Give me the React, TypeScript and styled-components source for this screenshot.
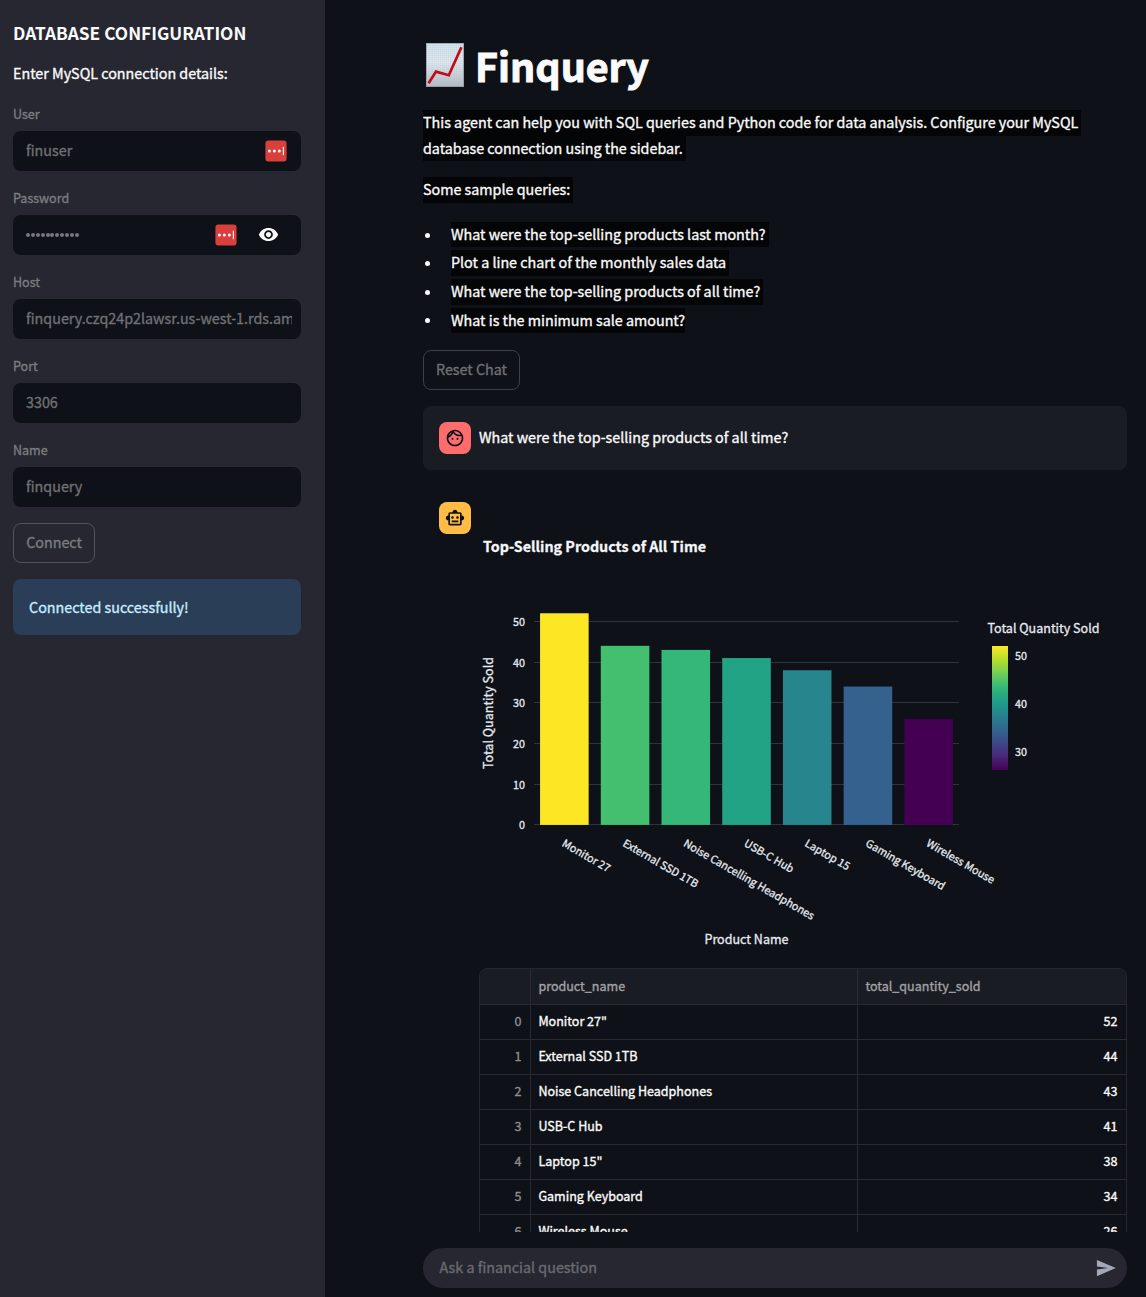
import React from "react";
import styled, { createGlobalStyle } from "styled-components";
import { MdOutlineFace, MdOutlineSmartToy, MdVisibility } from "react-icons/md";

const GlobalStyle = createGlobalStyle`
  * { box-sizing: border-box; }
  body {
    margin: 0;
    background: #0e1117;
    color: #fafafa;
    font-family: "Noto Sans CJK SC", "Noto Sans", sans-serif;
    font-size: 14.32px;
    line-height: 25.6px;
    -webkit-text-stroke: 0.35px currentColor;
  }
`;

const Page = styled.div`
  display: grid;
  grid-template-columns: 325px 1fr;
  height: 1297px;
  overflow: hidden;
`;

const Sidebar = styled.aside`
  background: #262730;
  padding: 21px 24px 0 13px;
`;

const SidebarTitle = styled.h2`
  margin: 0;
  font-size: 17.3px;
  line-height: 24px;
  font-weight: 600;
  white-space: nowrap;
  -webkit-text-stroke: 0;
`;

const SidebarText = styled.p`
  margin: 15px 0 17px;
`;

const Field = styled.div`
  margin-bottom: 16px;
`;

const Label = styled.label`
  display: block;
  height: 28px;
  line-height: 21px;
  font-size: 12.54px;
  color: #7b7c81;
`;

const InputBox = styled.div`
  display: flex;
  align-items: center;
  height: 40px;
  padding: 0 9px 0 13px;
  border-radius: 8px;
  background: #0e1117;
  color: #6f7074;
`;

const Value = styled.span`
  flex: 1;
  padding-bottom: 2px;
  overflow: hidden;
  white-space: nowrap;
`;

const Dots = styled.span`
  flex: 1;
  display: flex;
  gap: 0.9px;
  i {
    width: 4px;
    height: 4px;
    border-radius: 50%;
    background: #77787b;
  }
`;

const Manager = styled.svg<{ $gap: number }>`
  width: 22px;
  height: 22px;
  margin-right: ${(p) => p.$gap}px;
`;

const EyeIcon = styled(MdVisibility)`
  width: 21px;
  height: 21px;
  margin-right: 13.5px;
  color: #fafafa;
`;

const Button = styled.button<{ $width: number; $edge: string; $ink: string }>`
  display: block;
  width: ${(p) => p.$width}px;
  height: 40px;
  padding: 0 0 2px;
  border: 1px solid ${(p) => p.$edge};
  border-radius: 8px;
  background: transparent;
  color: ${(p) => p.$ink};
  font: inherit;
  -webkit-text-stroke: inherit;
`;

const Alert = styled.div`
  height: 56px;
  margin-top: 16px;
  padding: 16px;
  border-radius: 8px;
  background: #2a3e57;
  color: #c7ebff;
  line-height: 24px;
`;

const Main = styled.main`
  display: flex;
  flex-direction: column;
  height: 1297px;
  padding: 0 19px 0 98px;
`;

const Scroll = styled.div`
  height: 1232px;
  overflow: hidden;
  padding-top: 38px;
`;

const Title = styled.h1`
  display: flex;
  align-items: center;
  gap: 11px;
  margin: 0 0 19px;
  padding-left: 3px;
  height: 53px;
  font-size: 39.4px;
  line-height: 53px;
  font-weight: 700;
  -webkit-text-stroke: 1px currentColor;
`;

const ChartEmoji = styled.svg`
  width: 38px;
  height: 44px;
`;

const Marked = styled.span<{ $tail?: number }>`
  display: block;
  width: fit-content;
  padding: 0 ${(p) => p.$tail ?? 3}px 1.6px 0;
  background: #040507;
  line-height: 24px;
  white-space: nowrap;
`;

const Paragraph = styled.p`
  margin: 0 0 16px;
`;

const List = styled.ul`
  margin: 19px 0 17px;
  padding: 0;
  list-style: none;
`;

const Item = styled.li`
  display: flex;
  align-items: center;
  gap: 21px;
  padding-left: 2px;
  margin-bottom: 3px;
  &::before {
    content: "";
    width: 5px;
    height: 5px;
    margin-top: 1px;
    border-radius: 50%;
    background: #fafafa;
  }
`;

const Message = styled.section<{ $user?: boolean }>`
  display: flex;
  gap: 8px;
  margin-top: 16px;
  padding: ${(p) => (p.$user ? "16px" : "16px 0 16px 16px")};
  margin-bottom: ${(p) => (p.$user ? "0" : "16px")};
  border-radius: 8px;
  background: ${(p) => (p.$user ? "#1a1c24" : "transparent")};
`;

const Avatar = styled.div<{ $fill: string }>`
  display: flex;
  flex: none;
  align-items: center;
  justify-content: center;
  width: 32px;
  height: 32px;
  border-radius: 8px;
  background: ${(p) => p.$fill};
  color: #0e1117;
  font-size: 20px;
`;

const MessageText = styled.p`
  margin: 2px 0 4px;
`;

const Answer = styled.div`
  width: 648px;
`;

const ChartSvg = styled.svg`
  display: block;
  width: 648px;
  height: 450px;
  margin-bottom: 16px;
  fill: #e6eaf1;
  font-size: 10.75px;
  text {
    stroke: #e6eaf1;
    stroke-width: 0.3px;
  }
`;

const Table = styled.div`
  border: 1px solid #25272c;
  border-radius: 8px;
  overflow: hidden;
`;

const Row = styled.div<{ $head?: boolean }>`
  display: grid;
  grid-template-columns: 51px 327px 1fr;
  height: ${(p) => (p.$head ? 36 : 35)}px;
  border-bottom: 1px solid #292b30;
  background: ${(p) => (p.$head ? "#1a1c24" : "transparent")};
  color: ${(p) => (p.$head ? "#a0a1a5" : "#fafafa")};
  font-size: 12.54px;
  line-height: ${(p) => (p.$head ? 34 : 32)}px;
`;

const Cell = styled.div<{ $right?: boolean; $dim?: boolean }>`
  padding: 0 8.5px 0 7.4px;
  border-right: 1px solid #292b30;
  text-align: ${(p) => (p.$right ? "right" : "left")};
  color: ${(p) => (p.$dim ? "#8c8d91" : "inherit")};
  &:last-child { border-right: 0; }
`;

const Composer = styled.div`
  display: flex;
  align-items: center;
  justify-content: space-between;
  height: 40px;
  margin-top: 16px;
  padding: 0 11px 0 16.5px;
  border-radius: 20px;
  background: #262730;
  color: #6a6b71;
`;

const Placeholder = styled.span`
  padding-bottom: 2px;
`;

const SendIcon = styled.svg`
  width: 20px;
  height: 20px;
  fill: #a3a8b8;
`;

const products = [
  { name: 'Monitor 27"', label: "Monitor 27", sold: 52, color: "#fde725" },
  { name: "External SSD 1TB", label: "External SSD 1TB", sold: 44, color: "#44bf70" },
  { name: "Noise Cancelling Headphones", label: "Noise Cancelling Headphones", sold: 43, color: "#35b779" },
  { name: "USB-C Hub", label: "USB-C Hub", sold: 41, color: "#22a385" },
  { name: 'Laptop 15"', label: "Laptop 15", sold: 38, color: "#26858d" },
  { name: "Gaming Keyboard", label: "Gaming Keyboard", sold: 34, color: "#35618f" },
  { name: "Wireless Mouse", label: "Wireless Mouse", sold: 26, color: "#440154" },
];

const viridis = ["#fde725", "#b5de2b", "#6ece58", "#35b779", "#1f9e89", "#26828e", "#31688e", "#3e4989", "#482878", "#440154"];

const PLOT = { left: 55, right: 480, base: 322.9, unit: 4.07 };

function PasswordManagerIcon({ gap }: { gap: number }) {
  return (
    <Manager viewBox="0 0 22 22" $gap={gap}>
      <rect x="0.4" y="0.4" width="21.2" height="21.2" rx="3" fill="#d93f3b" />
      <circle cx="4.4" cy="11" r="1.5" fill="#fff" />
      <circle cx="9.3" cy="11" r="1.5" fill="#fff" />
      <circle cx="14.3" cy="11" r="1.5" fill="#fff" />
      <rect x="17.8" y="6.8" width="1.1" height="8.4" fill="#fff" />
    </Manager>
  );
}

function BarChart() {
  const step = (PLOT.right - PLOT.left) / products.length;
  return (
    <ChartSvg viewBox="0 0 648 450">
      <defs>
        <linearGradient id="scale" x1="0" y1="0" x2="0" y2="1">
          {viridis.map((c, i) => (
            <stop key={c} offset={i / (viridis.length - 1)} stopColor={c} />
          ))}
        </linearGradient>
      </defs>
      <text x="4" y="50" fontSize="14.3" fontWeight="700" fill="#fafafa">Top-Selling Products of All Time</text>
      {[0, 10, 20, 30, 40, 50].map((t) => {
        const y = Math.round(PLOT.base - t * PLOT.unit - 0.5);
        return (
          <g key={t}>
            <rect x={PLOT.left} y={y} width={PLOT.right - PLOT.left} height="1" fill="#31333c" />
            <text x="46" y={y + 4.6} textAnchor="end">{t}</text>
          </g>
        );
      })}
      {products.map((p, i) => {
        const x = PLOT.left + step * i;
        return (
          <g key={p.label}>
            <rect x={x + step * 0.1} y={PLOT.base - p.sold * PLOT.unit} width={step * 0.8} height={p.sold * PLOT.unit} fill={p.color} />
            <text transform={`translate(${x + 27.2} 343.6) rotate(30)`}>{p.label}</text>
          </g>
        );
      })}
      <text fontSize="12.54" textAnchor="middle" transform="translate(14 211) rotate(-90)">Total Quantity Sold</text>
      <text fontSize="12.54" textAnchor="middle" x="267.5" y="442">Product Name</text>
      <text fontSize="12.54" x="508.5" y="131">Total Quantity Sold</text>
      <rect x="513" y="144" width="16" height="124" fill="url(#scale)" />
      <text x="536" y="158">50</text>
      <text x="536" y="206">40</text>
      <text x="536" y="254">30</text>
    </ChartSvg>
  );
}

export default function App() {
  return (
    <>
      <GlobalStyle />
      <Page>
        <Sidebar>
          <SidebarTitle>DATABASE CONFIGURATION</SidebarTitle>
          <SidebarText>Enter MySQL connection details:</SidebarText>
          <Field>
            <Label>User</Label>
            <InputBox><Value>finuser</Value><PasswordManagerIcon gap={5} /></InputBox>
          </Field>
          <Field>
            <Label>Password</Label>
            <InputBox>
              <Dots>{Array.from({ length: 11 }, (_, i) => <i key={i} />)}</Dots>
              <PasswordManagerIcon gap={20.5} />
              <EyeIcon />
            </InputBox>
          </Field>
          <Field>
            <Label>Host</Label>
            <InputBox><Value>finquery.czq24p2lawsr.us-west-1.rds.amazonaws.com</Value></InputBox>
          </Field>
          <Field>
            <Label>Port</Label>
            <InputBox><Value>3306</Value></InputBox>
          </Field>
          <Field>
            <Label>Name</Label>
            <InputBox><Value>finquery</Value></InputBox>
          </Field>
          <Button $width={82} $edge="#51525a" $ink="#7b7c81">Connect</Button>
          <Alert>Connected successfully!</Alert>
        </Sidebar>
        <Main>
          <Scroll>
            <Title>
              <ChartEmoji viewBox="0 0 38 44">
                <defs>
                  <linearGradient id="paper" x1="0" y1="0" x2="0" y2="1">
                    <stop offset="0" stopColor="#d5e3ec" />
                    <stop offset="0.45" stopColor="#dfe7ee" />
                    <stop offset="1" stopColor="#b4bac2" />
                  </linearGradient>
                  <pattern id="mesh" width="2" height="2" patternUnits="userSpaceOnUse">
                    <path d="M0 0H2M0 0V2" stroke="#a9bccb" strokeWidth="0.3" />
                  </pattern>
                </defs>
                <rect x="0.3" y="0.3" width="37.4" height="43.4" fill="url(#paper)" />
                <rect x="0.3" y="0.3" width="37.4" height="43.4" fill="url(#mesh)" stroke="#a4acb5" strokeWidth="0.6" />
                <path d="M2.6 40.2L10 28.6L22.8 32.2L35.4 4.2" fill="none" stroke="#c40a12" strokeWidth="2.7" />
              </ChartEmoji>
              Finquery
            </Title>
            <Paragraph>
              <Marked>This agent can help you with SQL queries and Python code for data analysis. Configure your MySQL</Marked>
              <Marked>database connection using the sidebar.</Marked>
            </Paragraph>
            <Paragraph><Marked>Some sample queries:</Marked></Paragraph>
            <List>
              <Item><Marked>What were the top-selling products last month?</Marked></Item>
              <Item><Marked>Plot a line chart of the monthly sales data</Marked></Item>
              <Item><Marked>What were the top-selling products of all time?</Marked></Item>
              <Item><Marked $tail={0}>What is the minimum sale amount?</Marked></Item>
            </List>
            <Button $width={97} $edge="#3d3f44" $ink="#6f7074">Reset Chat</Button>
            <Message $user>
              <Avatar $fill="#ff6c6c"><MdOutlineFace /></Avatar>
              <MessageText>What were the top-selling products of all time?</MessageText>
            </Message>
            <Message>
              <Avatar $fill="#ffbd45"><MdOutlineSmartToy /></Avatar>
              <Answer>
                <BarChart />
                <Table>
                  <Row $head>
                    <Cell />
                    <Cell>product_name</Cell>
                    <Cell>total_quantity_sold</Cell>
                  </Row>
                  {products.map((p, i) => (
                    <Row key={p.name}>
                      <Cell $right $dim>{i}</Cell>
                      <Cell>{p.name}</Cell>
                      <Cell $right>{p.sold}</Cell>
                    </Row>
                  ))}
                </Table>
              </Answer>
            </Message>
          </Scroll>
          <Composer>
            <Placeholder>Ask a financial question</Placeholder>
            <SendIcon viewBox="0 0 24 24">
              <path d="M1.1 21.76L23.8 12.03 1.1 2.3l.01 7.91 13.62 1.82-13.62 1.81z" />
            </SendIcon>
          </Composer>
        </Main>
      </Page>
    </>
  );
}
